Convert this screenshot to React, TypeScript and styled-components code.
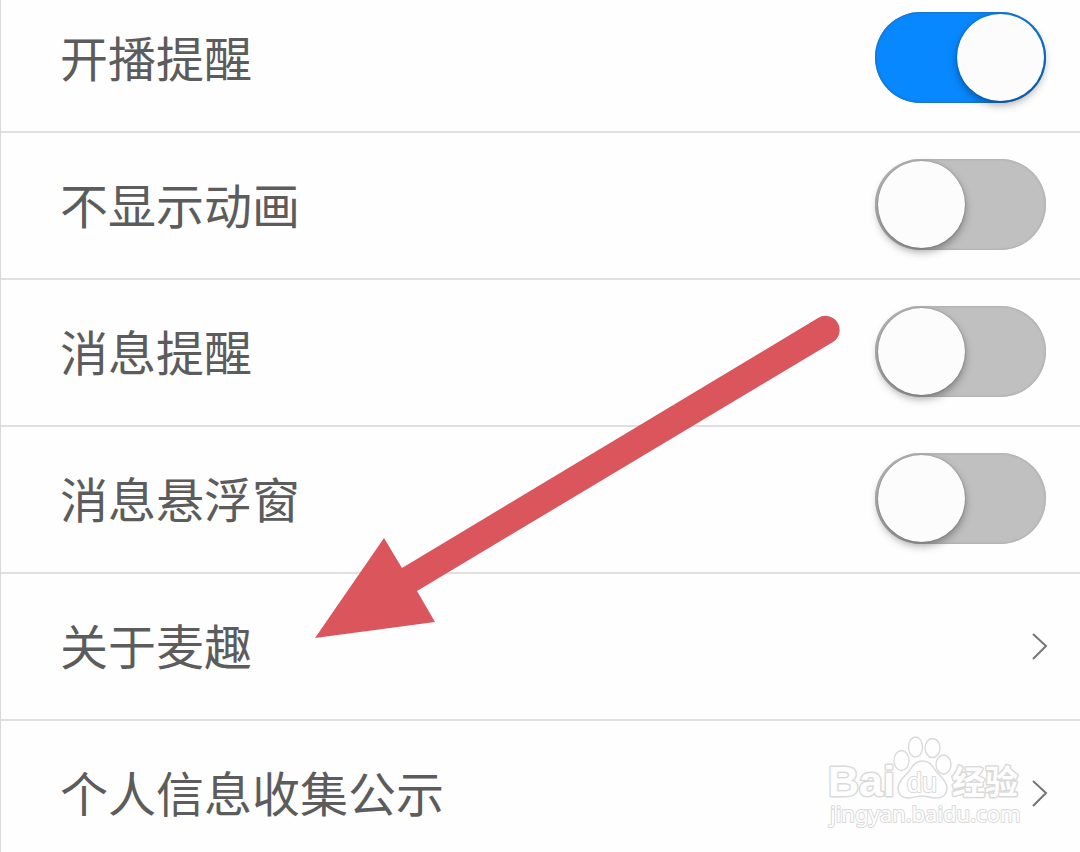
import React from "react";
import styled, { createGlobalStyle } from "styled-components";

const GlobalStyle = createGlobalStyle`
  * { box-sizing: border-box; }
  body {
    margin: 0;
    background: #fefefe;
    color: #5c5c5c;
    font-family: "Noto Sans CJK SC", "Noto Sans", sans-serif;
  }
`;

const Page = styled.main`
  position: relative;
  height: 100vh;
  overflow: hidden;
  border-left: 1px solid #d8d8d8;
`;

/* The list is scrolled a little, so its first row is partly out of view. */
const SettingsList = styled.ul`
  list-style: none;
  margin: -14px 0 0;
  padding: 0;
`;

const Item = styled.li`
  border-bottom: 2px solid #e0e0e0;
`;

const rowLayout = `
  display: flex;
  align-items: center;
  justify-content: space-between;
  min-height: 145px;
  padding: 0 34px 2px 59px;
  color: inherit;
  text-decoration: none;
`;

const SwitchRow = styled.label`
  ${rowLayout}
`;

const LinkRow = styled.a`
  ${rowLayout}
`;

const Title = styled.span`
  padding-bottom: 4px;
  font-size: 48px;
  line-height: 72px;
`;

const Switch = styled.input.attrs({ type: "checkbox", role: "switch" })`
  appearance: none;
  flex: none;
  width: 171px;
  height: 91px;
  margin: 0;
  padding: 2px 2px 2px 3px;
  border-radius: 46px;
  background: #c0c0c0;
  box-shadow: inset 0 0 2px 1px #b0b0b0;

  &::before {
    content: "";
    display: block;
    width: 87px;
    height: 87px;
    border-radius: 50%;
    background: #fcfcfc;
    box-shadow: 0 4px 8px rgba(0, 0, 0, 0.35), 0 0 2px rgba(0, 0, 0, 0.3);
  }

  &:checked {
    background: #0888ff;
    box-shadow: inset 0 0 2px 1px #1c72c4;
  }

  &:checked::before {
    margin-left: auto;
  }
`;

const ChevronIcon = styled.svg`
  flex: none;
  width: 16px;
  height: 28px;
  overflow: visible;
  fill: none;
  stroke: #757575;
  stroke-width: 2;
`;

const Arrow = styled.svg`
  position: absolute;
  top: 310px;
  left: 309px;
  width: 540px;
  height: 340px;
  fill: #da565c;
  pointer-events: none;
`;

const Watermark = styled.svg`
  position: absolute;
  top: 730px;
  right: 50px;
  width: 210px;
  height: 110px;
  fill: #fefefe;
  stroke: #dadada;
  stroke-width: 1.4;
  pointer-events: none;
`;

const Outlined = styled.text<{ $size: number; $weight?: number; $latin?: string }>`
  font-family: ${(p) => (p.$latin ? `"${p.$latin}", ` : "")}"Noto Sans CJK SC", sans-serif;
  font-size: ${(p) => p.$size}px;
  font-weight: ${(p) => p.$weight ?? 400};
  stroke-width: ${(p) => (p.$weight ? 3 : 2)};
  stroke-linejoin: round;
  paint-order: stroke;
`;

type Setting =
  | { kind: "switch"; title: string; on: boolean }
  | { kind: "link"; title: string };

const settings: Setting[] = [
  { kind: "switch", title: "开播提醒", on: true },
  { kind: "switch", title: "不显示动画", on: false },
  { kind: "switch", title: "消息提醒", on: false },
  { kind: "switch", title: "消息悬浮窗", on: false },
  { kind: "link", title: "关于麦趣" },
  { kind: "link", title: "个人信息收集公示" },
];

const Chevron = () => (
  <ChevronIcon viewBox="0 0 16 28" aria-hidden="true">
    <path d="M3 2 L16 14 L3 27" />
  </ChevronIcon>
);

export default function App() {
  return (
    <>
      <GlobalStyle />
      <Page>
        <SettingsList>
          {settings.map((s) => (
            <Item key={s.title}>
              {s.kind === "switch" ? (
                <SwitchRow>
                  <Title>{s.title}</Title>
                  <Switch defaultChecked={s.on} />
                </SwitchRow>
              ) : (
                <LinkRow href="#">
                  <Title>{s.title}</Title>
                  <Chevron />
                </LinkRow>
              )}
            </Item>
          ))}
        </SettingsList>

        <Arrow viewBox="310 310 540 340" aria-hidden="true">
          <path d="M315 638 L384 538 L402 568 L818 318 A14 14 0 0 1 833 342 L417 591 L435 622 Z" />
        </Arrow>

        <Watermark viewBox="820 730 210 110">
          <ellipse cx="901.5" cy="760.5" rx="7.5" ry="10" />
          <ellipse cx="915.5" cy="747" rx="7" ry="10" />
          <ellipse cx="932.5" cy="748" rx="7.5" ry="9.5" />
          <ellipse cx="943.5" cy="764.5" rx="7.5" ry="9.5" />
          <path d="M922 761 C929 761 932 765 935 770 C939 776 947 780 947 788 C947 795 942 798 936 798 C931 798 927 796 922 796 C917 796 914 798 908 798 C902 798 898 794 898 788 C898 780 906 776 910 770 C913 765 916 761 922 761 Z" />
          <Outlined x="828" y="796" $size={43} $weight={700} $latin="Liberation Sans">Bai</Outlined>
          <Outlined x="907" y="792" $size={27} $latin="Liberation Sans">du</Outlined>
          <Outlined x="952" y="794" $size={33} $weight={700}>经验</Outlined>
          <Outlined x="830" y="822" $size={22} $latin="Noto Sans">jingyan.baidu.com</Outlined>
        </Watermark>
      </Page>
    </>
  );
}
